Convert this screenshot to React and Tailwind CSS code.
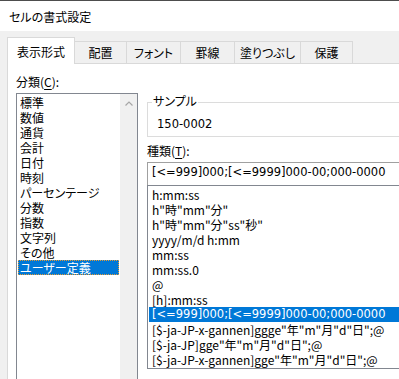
const categories = ['標準', '数値', '通貨', '会計', '日付', '時刻', 'パーセンテージ', '分数', '指数', '文字列', 'その他', 'ユーザー定義']

const formats = [
  'h:mm:ss',
  'h"時"mm"分"',
  'h"時"mm"分"ss"秒"',
  'yyyy/m/d h:mm',
  'mm:ss',
  'mm:ss.0',
  '@',
  '[h]:mm:ss',
  '[<=999]000;[<=9999]000-00;000-0000',
  '[$-ja-JP-x-gannen]ggge"年"m"月"d"日";@',
  '[$-ja-JP]gge"年"m"月"d"日";@',
  '[$-ja-JP-x-gannen]gge"年"m"月"d"日";@',
]

const tabs = [
  { label: '配置', w: 'w-[52px]' },
  { label: 'フォント', w: 'w-[54px]' },
  { label: '罫線', w: 'w-[54px]' },
  { label: '塗りつぶし', w: 'w-[66px]' },
  { label: '保護', w: 'w-[52px]' },
]

// digit-heavy strings render wider in the original UI font
const wide = "font-['DejaVu_Sans','Noto_Sans_CJK_JP',sans-serif] text-[11.5px]"

export default function App() {
  const selectedCategory = 'ユーザー定義'
  const selectedFormat = '[<=999]000;[<=9999]000-00;000-0000'

  return (
    <div className="w-[399px] h-[379px] overflow-hidden flex flex-col bg-[#f0f0f0] text-[12px] leading-[15px] text-black font-['Noto_Sans_CJK_JP','Noto_Sans',sans-serif] [font-feature-settings:'palt']">
      {/* title bar */}
      <div className="h-[31px] shrink-0 bg-white border-t border-[#4d4d4d] flex items-center pl-[9px]">
        セルの書式設定
      </div>

      <div className="flex-1 min-h-0 flex flex-col pl-[7px] pt-[6px]">
        {/* tabs */}
        <div className="h-[27px] shrink-0 flex items-end">
          <div className="h-[27px] w-[68px] bg-white border border-b-0 border-[#d9d9d9] flex items-center justify-center">
            表示形式
          </div>
          {tabs.map((t) => (
            <div
              key={t.label}
              className={`h-[23px] ${t.w} border-t border-r border-b border-[#d9d9d9] flex items-center justify-center`}
            >
              {t.label}
            </div>
          ))}
          <div className="flex-1 h-px bg-[#d9d9d9]" />
        </div>

        {/* panel */}
        <div className="flex-1 min-h-0 bg-white border-l border-[#d9d9d9] flex">
          {/* category column */}
          <div className="w-[131px] shrink-0 pl-[8px] pt-[10px] flex flex-col">
            <div>
              分類(<span className="underline underline-offset-2">C</span>):
            </div>
            <div className="mt-[4px] w-[122px] h-[300px] shrink-0 border border-[#828790] flex">
              <div className="w-[103px] pt-[1px]">
                {categories.map((c) => (
                  <div
                    key={c}
                    className={
                      c === selectedCategory
                        ? 'h-[15px] mx-[1px] pl-[2px] flex items-center whitespace-nowrap bg-[#0078d7] text-white outline-1 outline-dotted outline-[#e39b35] -outline-offset-1'
                        : 'h-[15px] mx-[1px] pl-[2px] flex items-center whitespace-nowrap'
                    }
                  >
                    {c}
                  </div>
                ))}
              </div>
              <div className="w-[17px] bg-[#f0f0f0] flex justify-center pt-[7px]">
                <svg width="8" height="5" viewBox="0 0 8 5">
                  <polyline points="0.5,4.5 4,1 7.5,4.5" fill="none" stroke="#a6a6a6" strokeWidth="1.2" />
                </svg>
              </div>
            </div>
          </div>

          {/* format column */}
          <div className="flex-1 min-w-0 pl-[8px] flex flex-col">
            <div className="relative mt-[38px] h-[35px] w-[400px] border border-[#dcdcdc] pl-[9px] pt-[12px]">
              <span className="absolute left-[4px] -top-[10px] bg-white px-[1px]">サンプル</span>
              <span className={wide}>150-0002</span>
            </div>

            <div className="mt-[6px]">
              種類(<span className="underline underline-offset-2">T</span>):
            </div>

            <div className={`mt-[4px] h-[23px] w-[400px] border-t border-l border-[#a0a0a0] pl-[4px] pt-[2px] whitespace-nowrap ${wide}`}>
              [&lt;=999]000;[&lt;=9999]000-00;000-0000
            </div>

            <div className="w-[400px] border border-[#828790] pt-[1px] pb-[1px]">
              {formats.map((f) => (
                <div
                  key={f}
                  className={
                    f === selectedFormat
                      ? `h-[15px] ml-[1px] pl-[3px] flex items-center whitespace-nowrap bg-[#0078d7] text-white ${wide}`
                      : 'h-[15px] ml-[1px] pl-[3px] flex items-center whitespace-nowrap'
                  }
                >
                  {f}
                </div>
              ))}
            </div>
          </div>
        </div>
      </div>
    </div>
  )
}
